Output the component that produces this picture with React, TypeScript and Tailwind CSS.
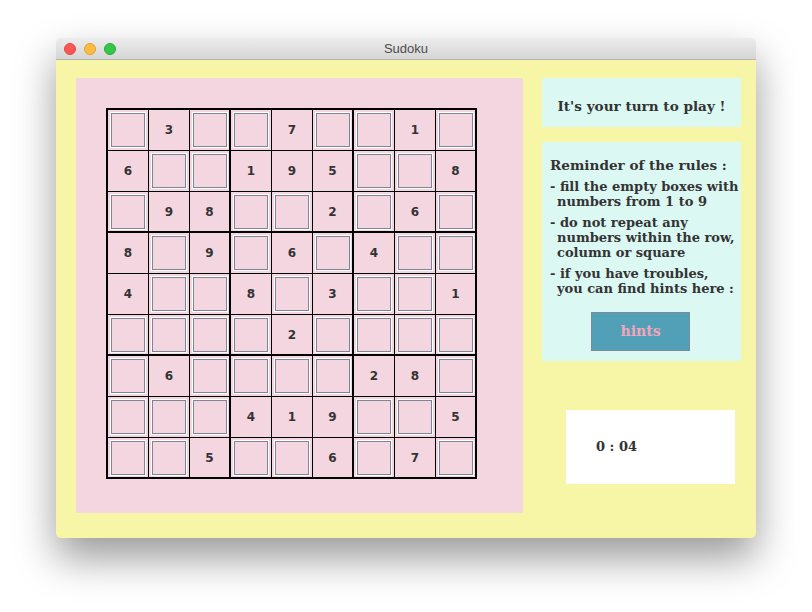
import React from "react";

const puzzle = [
  [0, 3, 0, 0, 7, 0, 0, 1, 0],
  [6, 0, 0, 1, 9, 5, 0, 0, 8],
  [0, 9, 8, 0, 0, 2, 0, 6, 0],
  [8, 0, 9, 0, 6, 0, 4, 0, 0],
  [4, 0, 0, 8, 0, 3, 0, 0, 1],
  [0, 0, 0, 0, 2, 0, 0, 0, 0],
  [0, 6, 0, 0, 0, 0, 2, 8, 0],
  [0, 0, 0, 4, 1, 9, 0, 0, 5],
  [0, 0, 5, 0, 0, 6, 0, 7, 0],
];

const serif = { fontFamily: '"DejaVu Serif", serif' };

function Cell({ value }: { value: number }) {
  return (
    <div className="bg-[#f4d6e0] flex items-center justify-center">
      {value ? (
        <span className="text-[12px] font-bold text-[#333]">{value}</span>
      ) : (
        <div className="w-[34px] h-[34px] border border-[#7b8794] shadow-[0_0_0_1px_#ffffff]" />
      )}
    </div>
  );
}

function Box({ br, bc }: { br: number; bc: number }) {
  const cells = [];
  for (let r = 0; r < 3; r++) {
    for (let c = 0; c < 3; c++) {
      cells.push(<Cell key={r * 3 + c} value={puzzle[br * 3 + r][bc * 3 + c]} />);
    }
  }
  return (
    <div className="grid grid-cols-[40px_40px_39px] grid-rows-[40px_40px_39px] gap-px bg-black">
      {cells}
    </div>
  );
}

function Board() {
  const boxes = [];
  for (let br = 0; br < 3; br++) {
    for (let bc = 0; bc < 3; bc++) {
      boxes.push(<Box key={br * 3 + bc} br={br} bc={bc} />);
    }
  }
  return (
    <div
      className="grid grid-cols-3 gap-[2px] bg-black p-[2px] w-fit"
      style={{ fontFamily: '"DejaVu Sans", sans-serif' }}
    >
      {boxes}
    </div>
  );
}

export default function App() {
  return (
    <div className="w-[812px] h-[612px] bg-white pt-[38px] pl-[56px]">
      <div className="w-[700px] h-[500px] rounded-[5px] overflow-hidden shadow-[0_20px_40px_rgba(0,0,0,0.4)] bg-[#f7f5a6]">
        <div className="relative h-[22px] bg-gradient-to-b from-[#ececec] to-[#d6d6d6] border-b border-[#b4b4b4] flex items-center">
          <div className="flex gap-[8px] pl-[8px]">
            <span className="w-[12px] h-[12px] rounded-full bg-[#fc5753] border border-[#df4744]" />
            <span className="w-[12px] h-[12px] rounded-full bg-[#fdbc40] border border-[#de9f34]" />
            <span className="w-[12px] h-[12px] rounded-full bg-[#33c748] border border-[#27aa35]" />
          </div>
          <div
            className="absolute inset-0 flex items-center justify-center text-[13px] text-[#4d4d4d]"
            style={{ fontFamily: '"Liberation Sans", sans-serif' }}
          >
            Sudoku
          </div>
        </div>

        <div className="flex pt-[18px] pl-[20px]">
          <div className="w-[447px] h-[435px] bg-[#f4d6e0] pt-[30px] pl-[30px]">
            <Board />
          </div>

          <div className="ml-[19px] w-[199px] flex flex-col text-[#333]" style={serif}>
            <div className="h-[49px] bg-[#dcf8f3] flex items-center justify-center pt-[7px] text-[13.6px] font-bold">
              It's your turn to play !
            </div>

            <div className="mt-[15px] h-[219px] bg-[#dcf8f3] pt-[14px] pl-[8px] pr-[2px] font-bold whitespace-nowrap">
              <div className="text-[13.6px] leading-[18px] mb-[5px]">Reminder of the rules :</div>
              <div className="text-[13px] leading-[15px] flex flex-col gap-[6px]">
                <div>
                  <div>- fill the empty boxes with</div>
                  <div className="pl-[7px]">numbers from 1 to 9</div>
                </div>
                <div>
                  <div>- do not repeat any</div>
                  <div className="pl-[7px]">numbers within the row,</div>
                  <div className="pl-[7px]">column or square</div>
                </div>
                <div>
                  <div>- if you have troubles,</div>
                  <div className="pl-[7px]">you can find hints here :</div>
                </div>
              </div>
              <button className="block mt-[16px] ml-[41px] w-[99px] h-[39px] bg-[#529fb8] border border-[#7b8a93] text-[#f5a5b9] text-[14px] font-bold">
                hints
              </button>
            </div>

            <div className="mt-[49px] ml-[24px] w-[169px] h-[74px] bg-white flex items-center pl-[30px] text-[13px] font-bold">
              0 : 04
            </div>
          </div>
        </div>
      </div>
    </div>
  );
}
